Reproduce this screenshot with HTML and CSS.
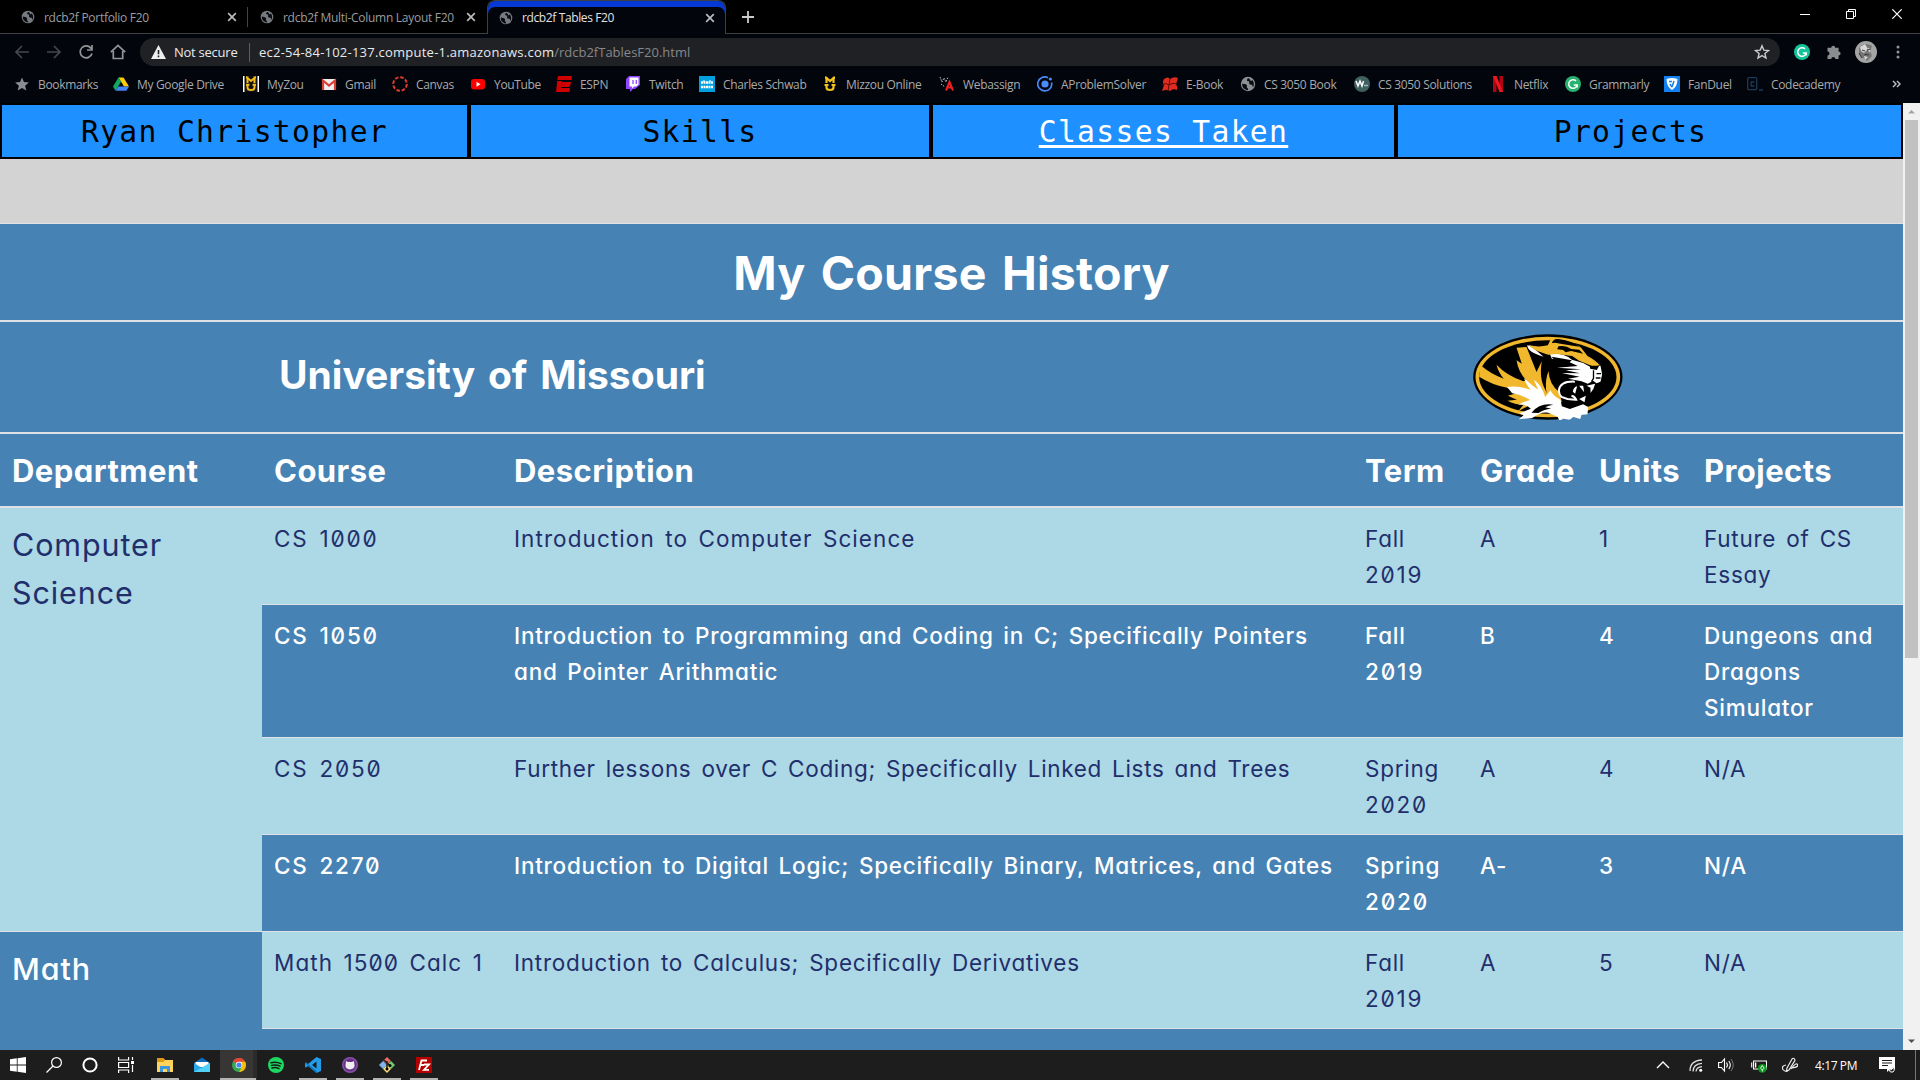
FILE: index.html
```html
<!DOCTYPE html>
<html lang="en">
<head>
<meta charset="utf-8">
<title>rdcb2f Tables F20</title>
<link rel="stylesheet" href="styles.css">
</head>
<body>
<svg class="defs" aria-hidden="true">
  <symbol id="globe" viewBox="0 0 16 16"><circle cx="8" cy="8" r="7.2" fill="currentColor"/><path d="M2.2 7.5c1.500.8 3.500.2 4.500 1.500s-.5 1.500.2 2.600 1.400.8 1.200 2.600c-3.500-.2-6.500-3-5.900-6.700zM9 2.200c-1.600.2-2.300 1.200-2 2.200s1.600.4 2.200 1.300-.6 1.700.4 2.500 2 .1 2.700 1 .2 1.800 1 1.800c1-2.300.7-5.300-1-7L11 5.200z" fill="#080b12"/></symbol>
  <symbol id="cross" viewBox="0 0 10 10"><path d="M1.200 1.200l7.600 7.600M8.800 1.200L1.200 8.800" stroke="currentColor" stroke-width="1.700"/></symbol>
  <symbol id="grammarly" viewBox="0 0 16 16"><circle cx="8" cy="8" r="8" fill="currentColor"/><path d="M11 4.900A4.300 4.300 0 1 0 12.200 9H8.800M12.200 9v2.400" fill="none" stroke="#fff" stroke-width="1.500"/></symbol>
</svg>

<header class="chrome">
  <div class="tabs">
    <div class="tab"><svg class="fav"><use href="#globe"/></svg><span>rdcb2f Portfolio F20</span><svg class="close"><use href="#cross"/></svg></div>
    <div class="tab second"><svg class="fav"><use href="#globe"/></svg><span>rdcb2f Multi-Column Layout F20</span><svg class="close"><use href="#cross"/></svg></div>
    <div class="tab active"><svg class="fav"><use href="#globe"/></svg><span>rdcb2f Tables F20</span><svg class="close"><use href="#cross"/></svg></div>
    <svg class="plus" viewBox="0 0 12 12"><path d="M6 0v12M0 6h12" stroke="#c8cacc" stroke-width="1.800"/></svg>
    <div class="window-buttons">
      <svg viewBox="0 0 10 10"><path d="M0 5.500h10" stroke="#fff"/></svg>
      <svg viewBox="0 0 10 10"><path d="M.5 2.500h7v7h-7zM2.500 2.500v-2h7v7h-2" fill="none" stroke="#fff"/></svg>
      <svg viewBox="0 0 10 10"><path d="M.3.3l9.400 9.400M9.700.3L.3 9.700" stroke="#fff" stroke-width="1.200"/></svg>
    </div>
  </div>

  <div class="toolbar">
    <div class="nav-buttons">
      <svg class="dim" viewBox="0 0 16 16"><path d="M15 8H2M8 2L2 8l6 6"/></svg>
      <svg class="dim" viewBox="0 0 16 16"><path d="M1 8h13M8 2l6 6-6 6"/></svg>
      <svg viewBox="0 0 16 16"><path d="M13.200 4.500A6 6 0 1 0 14 9.500M14 1v5H9"/></svg>
      <svg viewBox="0 0 16 16"><path d="M.8 8.200L8 1.500l7.200 6.700M3.300 7v7.500h9.400V7"/></svg>
    </div>
    <div class="omnibox">
      <svg class="warn" viewBox="0 0 15 14"><path d="M7.500 0L15 14H0z" fill="#eee"/><path d="M7.500 5v4.200M7.500 10.500v1.700" stroke="#202124" stroke-width="1.600"/></svg>
      <span class="secure">Not secure</span>
      <span class="url">ec2-54-84-102-137.compute-1.amazonaws.com<span class="path">/rdcb2fTablesF20.html</span></span>
      <svg class="star" viewBox="0 0 16 16"><path d="M8 1.800l1.800 4.300 4.700.4-3.600 3 1.100 4.500L8 11.600 4 14l1.100-4.500-3.600-3 4.700-.4z" fill="none" stroke="#c8cacc" stroke-width="1.400"/></svg>
    </div>
    <div class="extensions">
      <svg class="ext-g" viewBox="0 0 16 16"><use href="#grammarly"/></svg>
      <svg class="ext-p" viewBox="0 0 16 16"><path d="M1.500 3.800h3.700a2 2 0 1 1 4 0h3.400v3.700a2 2 0 1 1 0 4V15H9.300a2 2 0 1 0-4 0H1.500v-3.600a2 2 0 1 0 0-4z" fill="#8a8c90"/></svg>
      <svg class="avatar" viewBox="0 0 22 22"><circle cx="11" cy="11" r="11" fill="#a4a4a4"/><path d="M4 7c3-5 9-5 13-2l-2 5 2 5-5 5-4-3-4-4z" fill="#777"/><path d="M5 6l5-3 3 5-4 4-3-2zM13 7l3 1-2 4zM9 15l4 1-3 3z" fill="#d8d8d8"/><path d="M7 9l3 1M12 9l4-1M9 14c2-1 3-1 5 0M4 12l3 5" stroke="#444" stroke-width="1.200" fill="none"/></svg>
      <svg class="menu" viewBox="0 0 4 14"><circle cx="2" cy="2" r="1.500"/><circle cx="2" cy="7" r="1.500"/><circle cx="2" cy="12" r="1.500"/></svg>
    </div>
  </div>

  <nav class="bookmarks">
    <a><svg viewBox="0 0 16 16"><path d="M8 1.500l1.900 4.600 5 .4-3.800 3.200 1.200 4.800L8 11.900l-4.300 2.600 1.200-4.800L1.100 6.500l5-.4z" fill="#8c8e92"/></svg>Bookmarks</a>
    <a><svg viewBox="0 0 16 16"><path d="M5.500 1.500h5L16 10.500h-5z" fill="#fc0"/><path d="M5.500 1.500L0 10.500l2.600 4.200L8 5.700z" fill="#11a861"/><path d="M5.300 10.500H16l-2.600 4.200H2.600z" fill="#4285f4"/></svg>My Google Drive</a>
    <a><svg viewBox="0 0 16 16"><path d="M0 0h16v16H0z" fill="#fff"/><path d="M1.500 0h13v16h-13z" fill="#111"/><path d="M4.500 7V2L8 5l3.500-3v5M4.500 9v2.500q0 2.500 3.500 2.500t3.500-2.500V9M3 8.700h3.500M9.500 8.700H13M3 1.500h2.500M10.500 1.500H13" fill="none" stroke="#f2bd1d" stroke-width="2"/></svg>MyZou</a>
    <a><svg viewBox="0 0 16 16"><path d="M1 3h14v11H1z" fill="#eee"/><path d="M2 14V4.500l6 5 6-5V14" fill="none" stroke="#d93f35" stroke-width="2.200"/></svg>Gmail</a>
    <a><svg viewBox="0 0 16 16"><circle cx="8" cy="8" r="6.800" fill="none" stroke="#e03c2c" stroke-width="2" stroke-dasharray="3.600 1.740"/></svg>Canvas</a>
    <a><svg viewBox="0 0 16 16"><rect x="1" y="3" width="14" height="10.500" rx="3" fill="#f00"/><path d="M6.500 5.800v5l4-2.500z" fill="#fff"/></svg>YouTube</a>
    <a><svg viewBox="0 0 16 16"><path d="M2 0h14l-.7 4H1.300zM1.200 5h4.500l-.5 4H14l-1 2H5l-.2 1H14l-.6 4H0z" fill="#d00000"/><path d="M5.500 6h9.500l-.6 3.500H5z" fill="#d00000"/></svg>ESPN</a>
    <a><svg viewBox="0 0 16 16"><path d="M4 0h11v9l-5 4H8l-3 3v-3H1V3z" fill="#9146ff"/><path d="M4.500 1.500h9v7l-2.200 2H9l-2 2v-2H4.500z" fill="#fff"/><path d="M8 4v4M11.300 4v4" stroke="#9146ff" stroke-width="1.300"/></svg>Twitch</a>
    <a><svg viewBox="0 0 16 16"><path d="M0 0h16v16H0z" fill="#009fdf"/><path d="M2 6.500h12M2 11h12" stroke="#fff" stroke-width="2.300" stroke-dasharray="2 .5"/><path d="M5 4v2M11 4v2" stroke="#fff"/></svg>Charles Schwab</a>
    <a><svg viewBox="0 0 16 16"><path d="M4.500 7V2L8 5l3.500-3v5M4.500 9v2.500q0 2.500 3.500 2.500t3.500-2.500V9M2.500 9h4M9.500 9h4M3 2h2.500M10.500 2H13" fill="none" stroke="#f2c31d" stroke-width="2.200"/></svg>Mizzou Online</a>
    <a><svg viewBox="0 0 16 16"><path d="M1 1l2 5 2-4 2 4 2-5M2 8l4 3" fill="none" stroke="#bbb" stroke-dasharray="1.500 1"/><path d="M7 14.500L10.500 6 14 14.500M8.500 11.500h4" fill="none" stroke="#e22" stroke-width="2"/></svg>Webassign</a>
    <a><svg viewBox="0 0 16 16"><circle cx="8" cy="8" r="3.600" fill="#4a8bff"/><path d="M14.600 6.500A7 7 0 1 1 11 1.700" fill="none" stroke="#4a8bff" stroke-width="1.600"/><circle cx="13.300" cy="3" r="1.600" fill="#4a8bff"/></svg>AProblemSolver</a>
    <a><svg viewBox="0 0 16 16"><path d="M2 3q4-3 6 0 4-3 8-1l-2 6q2 3 1 6-4-2-7 1-3-2-8 0l2-6q-2-3 0-6z" fill="#e02b20"/><path d="M0 9q4-3 7 0 4-3 8-1M8 3L6 15" fill="none" stroke="#5c0d0c"/></svg>E-Book</a>
    <a><svg class="grey" viewBox="0 0 16 16"><use href="#globe"/></svg>CS 3050 Book</a>
    <a><svg viewBox="0 0 16 16"><circle cx="8" cy="8" r="8" fill="#40605f"/><path d="M2 5l2 5 2-5 2 5 1.500-5" fill="none" stroke="#fff" stroke-width="1.500"/><path d="M10 9.500h4" stroke="#9bb" stroke-width="1.500"/></svg>CS 3050 Solutions</a>
    <a><svg viewBox="0 0 16 16"><path d="M3 0h3.500v16H3zM9.500 0H13v16H9.500z" fill="#b1060f"/><path d="M3 0h3.500L13 16H9.500z" fill="#f01520"/></svg>Netflix</a>
    <a><svg class="green" viewBox="0 0 16 16"><use href="#grammarly"/></svg>Grammarly</a>
    <a><svg viewBox="0 0 16 16"><path d="M0 0h16v16H0z" fill="#1380f0"/><path d="M2.500 3q5.500-2 11 0-.2 8-5.500 11Q2.700 11 2.500 3z" fill="#fff"/><path d="M5 5.500h3M10 5l-2 6M6 8l2 3" stroke="#1380f0" stroke-width="1.500"/></svg>FanDuel</a>
    <a><svg viewBox="0 0 16 16"><rect x=".7" y="1.700" width="9" height="12" rx="1" fill="none" stroke="#1d3a55" stroke-width="1.300"/><path d="M7.300 6H4.200v4h3.100M12 14h4" fill="none" stroke="#1d3a55" stroke-width="1.300"/></svg>Codecademy</a>
    <svg class="more" viewBox="0 0 9 8"><path d="M1 1l3 3-3 3M5 1l3 3-3 3" fill="none" stroke="#c0c2c4" stroke-width="1.400"/></svg>
  </nav>
</header>

<main class="viewport">
  <div class="page">
    <nav class="site-nav">
      <a>Ryan Christopher</a><a>Skills</a><a class="current"><span>Classes Taken</span></a><a>Projects</a>
    </nav>
    <table class="courses">
      <colgroup><col class="c-dept"><col class="c-course"><col class="c-desc"><col class="c-term"><col class="c-grade"><col class="c-units"><col></colgroup>
      <thead>
        <tr class="title"><th colspan="7">My Course History</th></tr>
        <tr class="school">
          <th></th><th colspan="3">University of Missouri</th>
          <th colspan="3" class="logo"><svg viewBox="100 71 449 258">
            <ellipse cx="324" cy="200" rx="224" ry="128"/>
            <ellipse cx="324" cy="200" rx="217" ry="121" fill="#f1b82d"/>
            <ellipse cx="324" cy="200" rx="206" ry="110"/>
            <path fill="#f1b82d" d="M122 164q28 26 70 41-16-18-22-42 30 32 77 48l58 54-70 38 16-20q-26 0-48-12l28-3-27-12 26-7-28-17q-47-9-84-33zM230 112l30-2 30 75 16-32q-8 44 6 76l30 61-50-12-52-66q15 2 18-4-22-22-28-58l16 10z"/>
            <path fill="#f1b82d" d="M326 182q2 40 32 63l8 30-30 8q-30-45-10-101z"/>
            <path fill="#fff" d="M202 230q32-6 70 8-15-18-19-34 24 22 42 34l-13-30q24 16 34 52l16-20q8 18 30 28l4 20 24 8 40-14 15 8-2 22-18 2-4 12-20-6-12 8-18-3-12 6-6-12-28-12q-22-4-48 16l-40 4 14-12-12-6 34-14q-14-14-38-12 16-8 36-14-26-16-54-20z"/>
            <path d="M275 307q25-30 65-24-14 2-24 8l18 4q-24 2-38 13z"/>
            <path fill="#fff" d="M262 105q2 22 49 34-20-18-39-32zM328 126q48 4 68 22l34 10 22 12 30-4 5 26-5 22-12 5-10-8-16 9-19-7-40-8 34-6-53-11 54 1-42-9 46-3-72-5 62-5-26-12-52-10z"/>
            <path fill="#f1b82d" d="M266 104q30 8 58 1l8-17 16-5 22 14q38-2 55 17l18 23q25 13 37 28l-18 4-44-18-21-14-46-6-26 2-13-4q-32-10-46-25z"/>
            <path d="M336 98q6-16 24-11 33 4 60 22-32-4-74-12zM356 108q22-4 38 8l24 2 12 12-36-8-17 4-7-7-18-2zM335 139l27 5 34 6-12 10-24-6-8 4zM450 166h28l-7 13-20-4z"/>
            <path fill="none" stroke="#000" stroke-width="4" d="M461 180v24l-6 10M470 190h14M468 203h14"/>
            <path fill="#fff" d="M399 244q2-14 13-16l-6 22zM418 226l12 0 3 20zM440 226l26-6q-4 18-14 28l0-16zM418 266l20-10-4 20z"/>
            <path fill="none" stroke="#fff" stroke-width="6" d="M405 214q-44-2-48 26 0 12 8 20l18 6q16 2 26 2-4-10-14-12"/>
          </svg></th>
        </tr>
        <tr class="heads"><th>Department</th><th>Course</th><th>Description</th><th>Term</th><th>Grade</th><th>Units</th><th>Projects</th></tr>
      </thead>
      <tbody>
        <tr class="light first"><td class="dept" rowspan="4">Computer<br>Science</td><td class="num">CS 1000</td><td class="loose">Introduction to Computer Science</td><td>Fall<br><span class="num">2019</span></td><td>A</td><td>1</td><td>Future of CS<br>Essay</td></tr>
        <tr class="dark"><td class="num">CS 1050</td><td>Introduction to Programming and Coding in C; Specifically Pointers<br>and Pointer Arithmatic</td><td>Fall<br><span class="num">2019</span></td><td>B</td><td>4</td><td>Dungeons and<br>Dragons<br>Simulator</td></tr>
        <tr class="light"><td class="num">CS 2050</td><td class="tight">Further lessons over C Coding; Specifically Linked Lists and Trees</td><td>Spring<br><span class="num">2020</span></td><td>A</td><td>4</td><td>N/A</td></tr>
        <tr class="dark"><td class="num">CS 2270</td><td>Introduction to Digital Logic; Specifically Binary, Matrices, and Gates</td><td>Spring<br><span class="num">2020</span></td><td>A-</td><td>3</td><td>N/A</td></tr>
        <tr class="light"><td class="dept alt" rowspan="2">Math</td><td class="loose">Math 1500 Calc 1</td><td>Introduction to Calculus; Specifically Derivatives</td><td>Fall<br><span class="num">2019</span></td><td>A</td><td>5</td><td>N/A</td></tr>
        <tr class="dark"><td></td><td></td><td></td><td></td><td></td><td></td></tr>
      </tbody>
    </table>
  </div>
  <div class="scrollbar">
    <svg viewBox="0 0 17 17"><path d="M5 10.500h7L8.500 7z" fill="#a3a3a3"/></svg>
    <div class="thumb"></div>
    <svg viewBox="0 0 17 17"><path d="M5 6.500h7L8.500 10z" fill="#505050"/></svg>
  </div>
</main>

<footer class="taskbar">
  <div class="launch">
    <i><svg viewBox="0 0 16 16"><path d="M0 2.300l6.800-1v6.300H0zM7.600 1.200L16 0v7.600H7.600zM0 8.400h6.800v6.300L0 13.700zM7.600 8.400H16V16l-8.400-1.200z" fill="#fff"/></svg></i>
    <i><svg viewBox="0 0 16 16"><circle cx="10.500" cy="5.500" r="4.900" fill="none" stroke="#fff" stroke-width="1.200"/><path d="M7 9L.5 15.500" stroke="#fff" stroke-width="1.300"/></svg></i>
    <i><svg viewBox="0 0 16 16"><circle cx="8" cy="8" r="6.600" fill="none" stroke="#fff" stroke-width="2"/></svg></i>
    <i><svg viewBox="0 0 16 16"><path d="M.6 0v3h10V0M.6 16v-3h10v3M.6 5.500h10v5H.6zM14.500 0v3M14.500 8v7" fill="none" stroke="#fff" stroke-width="1.200"/><path d="M13 4h3v3h-3z" fill="#fff"/></svg></i>
  </div>
  <div class="apps">
    <i class="open"><svg viewBox="0 0 16 16"><path d="M0 1h6l2 2h8v12H0z" fill="#ffd35c"/><path d="M0 1h6l2 2-1.500 2H0z" fill="#dc9a12"/><path d="M3 15V9h10v6h-3v-3H6v3z" fill="#3a96dd"/></svg></i>
    <i><svg viewBox="0 0 16 16"><path d="M0 6l8-5.500L16 6v9H0z" fill="#0f6cbd"/><path d="M1.500 5h13v5h-13z" fill="#fff"/><path d="M0 6l8 5 8-5v9H0z" fill="#28a8ea"/><path d="M0 15l16-9v9z" fill="#50d0f5"/></svg></i>
    <i class="open selected"><svg viewBox="0 0 16 16"><circle cx="8" cy="8" r="7" fill="#34a853"/><path d="M8 8L2 4.300A7 7 0 0 1 14.200 4.800H8z" fill="#ea4335"/><path d="M8 4.800h6.200A7 7 0 0 1 8 15l3-5z" fill="#fbbc05"/><circle cx="8" cy="8" r="3.300" fill="#fff"/><circle cx="8" cy="8" r="2.600" fill="#4285f4"/></svg></i>
    <i><svg viewBox="0 0 16 16"><circle cx="8" cy="8" r="8" fill="#1ed760"/><path d="M3 5.700q5-1.500 10 1M3.500 8.400q4.500-1.200 8.500.8M4 11q3.500-1 7 .6" fill="none" stroke="#191919" stroke-width="1.500" stroke-linecap="round"/></svg></i>
    <i class="open"><svg viewBox="0 0 16 16"><path d="M11.500 0L16 2v12l-4.500 2L3 9l-2 1.600-1-.6V6l1-.6L3 7zM11.500 4.500L7 8l4.500 3.500z" fill="#229be9" fill-rule="evenodd"/><path d="M0 6l1-.6L11.500 14v2z" fill="#0877b9"/></svg></i>
    <i class="open"><svg viewBox="0 0 16 16"><circle cx="8" cy="8" r="8" fill="#8652a8"/><circle cx="8" cy="8" r="6.500" fill="#653083"/><path d="M4 4l2 1h4l2-1 .6 5Q12 12 8 12.500 4 12 3.400 9z" fill="#eee"/></svg></i>
    <i class="open"><svg viewBox="0 0 16 16"><path d="M8 0l3.800 3.800L8 7.500 4.200 3.800z" fill="#ed6d65"/><path d="M4 4l4 4-4 4-4-4z" fill="#80b3ee"/><path d="M12 4l4 4-4 4-4-4z" fill="#79c96b"/><path d="M8 8l4 4-4 4-4-4z" fill="#f7dd80"/><path d="M5 3l3 3 3 2.500M8 4v9" stroke="#222" stroke-width="1.500"/><circle cx="8" cy="12" r="1.500"/><circle cx="11" cy="8.500" r="1.500"/></svg></i>
    <i class="open"><svg viewBox="0 0 16 16"><path d="M0 0h16v16H0z" fill="#b50000"/><path d="M3 13L5.500 3.500H11M4 8h4M8 7.500h5L8 12.800h5" fill="none" stroke="#fff" stroke-width="1.800"/></svg></i>
  </div>
  <div class="tray">
    <svg viewBox="0 0 16 16"><path d="M2 11l6-6 6 6" fill="none" stroke="#fff" stroke-width="1.400"/></svg>
    <svg viewBox="0 0 16 16"><path d="M2 14Q2 3.500 14 3M5 14.500Q5 7 14 6.300M8 14.500Q8.500 10 14 9.600" fill="none" stroke="#ddd" stroke-width="1.300"/><circle cx="12.700" cy="13.200" r="1.500" fill="#fff"/></svg>
    <svg viewBox="0 0 16 16"><path d="M.6 5.500h2.800L6.500 2v12l-3.100-3.500H.6z" fill="none" stroke="#fff" stroke-width="1.100"/><path d="M8.500 5.500q1.800 2.500 0 5M10.800 4q3 4 0 8" fill="none" stroke="#fff" stroke-width="1.100"/><path d="M13 2q4.500 6 0 12" fill="none" stroke="#777"/></svg>
    <svg viewBox="0 0 16 16"><path d="M2.600 4h12.900v8H2.600zM.7 5.500v5" fill="none" stroke="#fff" stroke-width="1.100"/><path d="M4 5.500h1.300v5H4z" fill="#fff"/><circle cx="11.300" cy="11.300" r="4.400" fill="#0c951b"/><path d="M11.300 8.500l1.800 2.700-1.800 1.800-1.800-1.800zM11.300 12.500v2" stroke="#fff" stroke-width=".9" fill="none"/></svg>
    <svg viewBox="0 0 16 16"><path d="M5 11l5-9q1.500-1.500 2.500 0t-.5 3l-5 8-2.500 1zM4 8q-5 1-3 4.500 2 2.500 5 1.500M9 12q5-7 6.500-4.500T10 11" fill="none" stroke="#eee" stroke-width="1.200"/></svg>
    <time>4:17 PM</time>
    <svg viewBox="0 0 16 16"><path d="M0 0h16v12h-5l-3 3v-3H0z" fill="#fff"/><path d="M3 3.500h10M3 6h10M3 8.500h6" stroke="#1d1d1d"/><path d="M10 13q5 0 3-4 4 3 1 6-3 1-4-2z" fill="#222" stroke="#fff"/></svg>
    <b></b>
  </div>
</footer>
</body>
</html>
```
FILE: styles.css
```css
* { box-sizing: border-box; }
body {
  margin: 0;
  width: 1920px;
  height: 1080px;
  overflow: hidden;
  display: flex;
  flex-direction: column;
  background: #000;
  font-family: "Open Sans", sans-serif;
}
svg { display: block; flex: none; }
.defs { width: 0; height: 0; position: absolute; }

/* browser window */
.chrome { height: 103px; background: #02050c; color: #9b9da0; font-size: 12px; }
.tabs { height: 34px; display: flex; background: #000; border-bottom: 1px solid #3f4042; }
.tab { height: 34px; display: flex; align-items: center; padding: 0 11px 0 21px; width: 248px; letter-spacing: -.28px; white-space: nowrap; }
.tab.second { width: 239px; padding: 0 11px 0 20px; }
.tab.second::before { content: ""; width: 1px; height: 20px; margin: 0 11px 0 -21px; background: #444; flex: none; }
.tab.second .fav { margin-left: 1px; }
.tab.active { width: 239px; padding: 0 10px 0 11px; background: #02050c; border: 1px solid #3f4042; border-bottom: 0; border-radius: 8px 8px 0 0; box-shadow: inset 0 6px #0538d5; color: #e2e2e3; letter-spacing: -.38px; }
.fav { width: 14px; height: 14px; margin-right: 9px; color: #777a7e; }
.close { width: 10px; height: 10px; margin-left: auto; color: #b9bbbd; }
.plus { width: 12px; height: 12px; margin: 11px 0 0 16px; }
.window-buttons { margin-left: auto; display: flex; gap: 36px; padding: 9px 18px 0 0; }
.window-buttons svg { width: 10px; height: 10px; }

.toolbar { height: 36px; display: flex; align-items: center; }
.nav-buttons { width: 140px; padding-left: 14px; display: flex; gap: 16px; }
.nav-buttons svg { width: 16px; height: 16px; fill: none; stroke: #929497; stroke-width: 1.7; }
.nav-buttons .dim { stroke: #44474b; }
.omnibox { width: 1640px; height: 28px; border-radius: 14px; background: #202124; display: flex; align-items: center; padding: 0 10px 0 11px; font-size: 13px; color: #e8eaed; letter-spacing: -.25px; }
.warn { width: 15px; height: 14px; }
.secure { width: 76px; margin-left: 8px; border-right: 1px solid #5b5d60; line-height: 19px; white-space: nowrap; }
.url { margin-left: 9px; letter-spacing: .23px; }
.path { color: #85888b; letter-spacing: 0; }
.star { width: 16px; height: 16px; margin-left: auto; }
.extensions { display: flex; align-items: center; padding-left: 14px; }
.ext-g { width: 16px; height: 16px; color: #15c39a; }
.ext-p { width: 16px; height: 16px; margin-left: 16px; }
.avatar { width: 22px; height: 22px; margin-left: 13px; }
.menu { width: 4px; height: 14px; margin-left: 19px; fill: #929497; }

.bookmarks {
  height: 28px;
  padding-left: 14px;
  display: grid;
  align-items: center;
  grid-template-columns: 99px 130px 78px 71px 78px 86px 69px 74px 123px 117px 98px 125px 78px 114px 136px 75px 99px 83px 145px auto;
}
.bookmarks a { display: flex; align-items: center; gap: 8px; white-space: nowrap; letter-spacing: -.33px; color: #a8aaac; }
.bookmarks a svg { width: 16px; height: 16px; }
.bookmarks .grey { color: #8d8f92; }
.bookmarks .green { color: #27b270; }
.bookmarks .more { width: 9px; height: 8px; }

/* web page */
.viewport { height: 947px; display: flex; overflow: hidden; }
.page { width: 1903px; height: 947px; overflow: hidden; background: #d3d3d3; }
.site-nav { height: 56px; margin-bottom: 64px; display: grid; grid-template-columns: 469px 462px 465px 507px; font: 29.7px/53px "DejaVu Sans Mono", monospace; letter-spacing: 1.32px; }
.site-nav a { height: 56px; border: 2px solid #000; background: #1e90ff; color: #000; text-align: center; white-space: nowrap; }
.site-nav a:last-child { padding-right: 38px; }
.site-nav .current { color: #fff; }
.site-nav .current span { text-decoration: underline; text-decoration-thickness: 3px; text-underline-offset: 3px; text-decoration-skip-ink: none; }

.courses {
  width: 1903px;
  table-layout: fixed;
  border-spacing: 0;
  border-top: 1px solid #dee2e6;
  font: 22.5px/36px Inter, sans-serif;
  font-feature-settings: "zero", "cv11";
  letter-spacing: .75px;
  word-spacing: 3px;
  white-space: nowrap;
}
.c-dept { width: 262px; }
.c-course { width: 240px; }
.c-desc { width: 851px; }
.c-term { width: 115px; }
.c-grade { width: 119px; }
.c-units { width: 105px; }
.courses th { padding: 2px 12px 0; background: #4682b4; color: #fff; font-weight: 700; border-bottom: 2px solid #dee2e6; text-align: left; }
.courses .title th { height: 98px; text-align: center; font-size: 46.5px; letter-spacing: .25px; word-spacing: 4px; }
.courses .school th { height: 112px; font-size: 39px; letter-spacing: 0; word-spacing: 3.5px; padding: 0 12px 4px 17px; }
.courses .school .logo { padding: 0 0 0 5px; }
.logo svg { width: 150px; height: 86px; }
.courses .heads th { height: 74px; font-size: 31px; letter-spacing: .45px; }
.courses td { padding: 13px 12px 11px; vertical-align: top; border-top: 1px solid #dee2e6; }
.courses .first td { border-top: 0; }
.light { background: #add8e6; color: #1f2f6c; }
.dark { background: #4682b4; color: #fff; font-weight: 500; }
.courses .num { letter-spacing: 1.8px; }
.courses .loose { letter-spacing: 1.08px; }
.courses .tight { letter-spacing: .68px; }
.courses .dept { font-size: 30.5px; line-height: 48px; letter-spacing: .9px; background: #add8e6; }
.courses .alt { background: #4682b4; color: #fff; font-weight: 500; }

.scrollbar { width: 17px; height: 947px; background: #f1f1f1; display: flex; flex-direction: column; align-items: center; }
.scrollbar svg { width: 17px; height: 17px; }
.thumb { width: 13px; height: 538px; background: #c1c1c1; margin-bottom: auto; }

/* desktop taskbar */
.taskbar { height: 30px; background: #1d1d1d; display: flex; }
.taskbar i { display: flex; align-items: center; justify-content: center; height: 30px; }
.taskbar i svg { width: 16px; height: 16px; }
.launch { display: grid; grid-template-columns: repeat(4, 36px); }
.apps { display: grid; grid-template-columns: repeat(8, 37px); padding-left: 2px; }
.open { background: linear-gradient(#b6b4b1, #b6b4b1) 50% 100% / 28px 2px no-repeat; }
.apps .selected { background: linear-gradient(#b6b4b1, #b6b4b1) 0 100% / 36px 2px no-repeat, linear-gradient(90deg, #373635 33px, #2b2b2a 33px); }
.tray { margin-left: auto; display: grid; grid-template-columns: 33px 30px 33px 31px 33px 64px 36px 1px; align-items: center; padding-right: 4px; }
.tray svg { width: 16px; height: 16px; }
.tray time { color: #fff; font-size: 12px; letter-spacing: -.4px; white-space: nowrap; }
.tray b { width: 1px; height: 30px; background: #777; }
```
